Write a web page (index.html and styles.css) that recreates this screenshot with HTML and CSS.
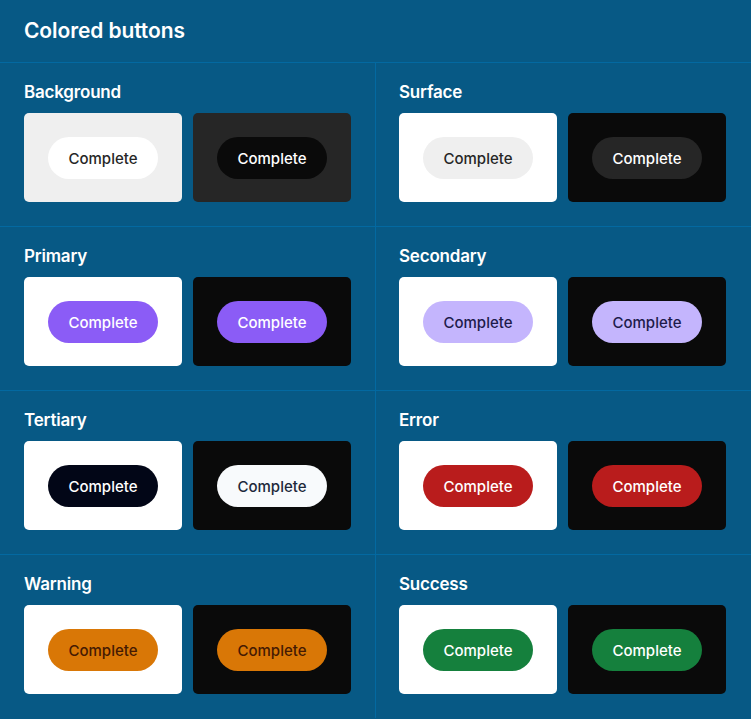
FILE: index.html
```html
<!DOCTYPE html>
<html>
<head>
<meta charset="utf-8">
<link rel="stylesheet" href="styles.css">
</head>
<body>
<div class="panel">
  <header class="head"><h1>Colored buttons</h1></header>
  <div class="grid">
    <section class="cell">
      <h2>Background</h2>
      <div class="pair">
        <div class="card light soft"><button class="btn bg-l">Complete</button></div>
        <div class="card dark soft"><button class="btn bg-d">Complete</button></div>
      </div>
    </section>
    <section class="cell right">
      <h2>Surface</h2>
      <div class="pair">
        <div class="card light"><button class="btn sf-l">Complete</button></div>
        <div class="card dark"><button class="btn sf-d">Complete</button></div>
      </div>
    </section>
    <section class="cell">
      <h2>Primary</h2>
      <div class="pair">
        <div class="card light"><button class="btn primary">Complete</button></div>
        <div class="card dark"><button class="btn primary">Complete</button></div>
      </div>
    </section>
    <section class="cell right">
      <h2>Secondary</h2>
      <div class="pair">
        <div class="card light"><button class="btn secondary">Complete</button></div>
        <div class="card dark"><button class="btn secondary">Complete</button></div>
      </div>
    </section>
    <section class="cell">
      <h2>Tertiary</h2>
      <div class="pair">
        <div class="card light"><button class="btn ter-l">Complete</button></div>
        <div class="card dark"><button class="btn ter-d">Complete</button></div>
      </div>
    </section>
    <section class="cell right">
      <h2>Error</h2>
      <div class="pair">
        <div class="card light"><button class="btn error">Complete</button></div>
        <div class="card dark"><button class="btn error">Complete</button></div>
      </div>
    </section>
    <section class="cell last">
      <h2>Warning</h2>
      <div class="pair">
        <div class="card light"><button class="btn warning">Complete</button></div>
        <div class="card dark"><button class="btn warning">Complete</button></div>
      </div>
    </section>
    <section class="cell right last">
      <h2>Success</h2>
      <div class="pair">
        <div class="card light"><button class="btn success">Complete</button></div>
        <div class="card dark"><button class="btn success">Complete</button></div>
      </div>
    </section>
  </div>
</div>
</body>
</html>
```
FILE: styles.css
```css
* { box-sizing: border-box; }
html, body { margin: 0; padding: 0; }
body {
  background: #075985;
  font-family: "Inter", "Liberation Sans", sans-serif;
  color: #ffffff;
  width: 751px;
  height: 719px;
  overflow: hidden;
}
.head {
  height: 63px;
  display: flex;
  align-items: center;
  padding: 0 24px;
  border-bottom: 1px solid #0369a1;
}
.head h1 {
  margin: 0;
  font-size: 21px;
  font-weight: 600;
  line-height: 24px;
  letter-spacing: -0.1px;
}
.grid {
  display: grid;
  grid-template-columns: 375px 376px;
}
.cell {
  padding: 19px 24px 24px 24px;
  border-bottom: 1px solid #0369a1;
}
.cell.right {
  border-left: 1px solid #0369a1;
  padding-left: 23px;
}
.cell.last { border-bottom: none; }
.cell h2 {
  margin: 0 0 11px 0;
  font-size: 17px;
  font-weight: 600;
  line-height: 20px;
  letter-spacing: -0.2px;
}
.pair {
  display: grid;
  grid-template-columns: 158px 158px;
  gap: 11px;
}
.card {
  height: 89px;
  border-radius: 5px;
  display: flex;
  align-items: center;
  justify-content: center;
}
.card.light { background: #ffffff; }
.card.dark { background: #0a0a0a; }
.card.light.soft { background: #efefef; }
.card.dark.soft { background: #262626; }
.btn {
  width: 110px;
  height: 42px;
  margin-top: 1px;
  border: none;
  border-radius: 999px;
  font-family: "Inter", "Liberation Sans", sans-serif;
  font-size: 15px;
  font-weight: 500;
  padding: 0;
  cursor: pointer;
}
.bg-l { background: #ffffff; color: #262626; }
.bg-d { background: #0a0a0a; color: #ffffff; }
.sf-l { background: #efefef; color: #262626; }
.sf-d { background: #262626; color: #ffffff; }
.primary { background: #8b5cf6; color: #ffffff; }
.secondary { background: #c4b5fd; color: #1e1b4b; }
.ter-l { background: #020617; color: #ffffff; }
.ter-d { background: #f8fafc; color: #1e293b; }
.error { background: #b91c1c; color: #ffffff; }
.warning { background: #d97706; color: #451a03; }
.success { background: #15803d; color: #ffffff; }
```
